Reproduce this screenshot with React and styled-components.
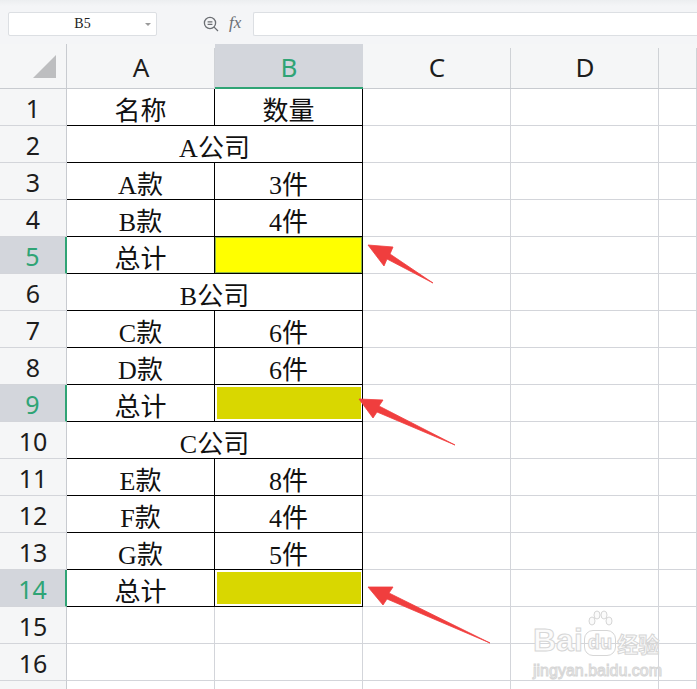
import styled, { createGlobalStyle } from "styled-components";

const GlobalStyle = createGlobalStyle`
  html, body {
    margin: 0;
    padding: 0;
    background: #fff;
    overflow: hidden;
  }
  * { box-sizing: border-box; }
`;

const GREEN = "#2fa475";
const GRID = "#d3d5da";
const HEAD_LINE = "#c8cbd0";
const COLS = "67px 148px 148px 148px 148px 1fr";

const rows = [
  { n: 1, a: "名称", b: "数量" },
  { n: 2, merged: "A公司" },
  { n: 3, a: "A款", b: "3件" },
  { n: 4, a: "B款", b: "4件" },
  { n: 5, a: "总计", fill: "bright", active: true },
  { n: 6, merged: "B公司" },
  { n: 7, a: "C款", b: "6件" },
  { n: 8, a: "D款", b: "6件" },
  { n: 9, a: "总计", fill: "olive", active: true },
  { n: 10, merged: "C公司" },
  { n: 11, a: "E款", b: "8件" },
  { n: 12, a: "F款", b: "4件" },
  { n: 13, a: "G款", b: "5件" },
  { n: 14, a: "总计", fill: "olive", active: true },
  { n: 15, empty: true },
  { n: 16, empty: true },
  // row 17 only peeks in at the bottom edge, its number is below the fold
  { n: "", empty: true },
];

// red callout arrows, tip -> head -> tail
const arrows = [
  "368,245 393,247 390,254 433,283 387,259 384,266",
  "359,399 383,400 379,406 455,445 377,412 373,418",
  "368,587 393,587 389,593 490,643 387,599 383,605",
];

const App = () => {
  return (
    <Page>
      <GlobalStyle />
      <Toolbar>
        <NameBox>
          <NameText>B5</NameText>
          <Caret />
        </NameBox>
        <ZoomIcon width="16" height="16" viewBox="0 0 16 16">
          <circle cx="7" cy="7" r="5.6" fill="none" stroke="#6b6e73" strokeWidth="1.3" />
          <path d="M4.6 5.9h4.8M4.6 8.3h4.8M11.1 11.1l3.9 3.9" stroke="#6b6e73" strokeWidth="1.3" fill="none" />
        </ZoomIcon>
        <Fx>fx</Fx>
        <Formula />
      </Toolbar>

      <Sheet>
        <HeaderRow>
          <Corner>
            <Triangle />
          </Corner>
          <ColHead>A</ColHead>
          <ColHead $active>B</ColHead>
          <ColHead>C</ColHead>
          <ColHead>D</ColHead>
          <ColHead />
        </HeaderRow>

        {rows.map((r, i) => (
          <Row key={i}>
            <RowHead $active={r.active}>{r.n}</RowHead>
            {r.merged && (
              <Cell $framed $span={2}>
                {r.merged}
              </Cell>
            )}
            {!r.merged && !r.empty && (
              <>
                <Cell $framed>{r.a}</Cell>
                <Cell $framed>
                  {r.fill ? <Fill $variant={r.fill} /> : r.b}
                </Cell>
              </>
            )}
            {r.empty && (
              <>
                <Cell />
                <Cell />
              </>
            )}
            <Cell />
            <Cell />
            <Cell />
          </Row>
        ))}
      </Sheet>

      <Arrows width="697" height="689" viewBox="0 0 697 689">
        {arrows.map((p, i) => (
          <polygon key={i} points={p} fill="#f03e3e" stroke="#f03e3e" strokeWidth="0.8" strokeLinejoin="round" />
        ))}
      </Arrows>

      <Watermark>
        <LogoLine>
          <Brand>Bai</Brand>
          <PawBox>
            <Paw width="32" height="20" viewBox="0 0 32 20">
              <ellipse cx="8" cy="11" rx="3" ry="4" fill="#fbfbfb" stroke="#d6d6d6" />
              <ellipse cx="13" cy="5" rx="3" ry="4" fill="#fbfbfb" stroke="#d6d6d6" />
              <ellipse cx="20" cy="5" rx="3" ry="4" fill="#fbfbfb" stroke="#d6d6d6" />
              <ellipse cx="25" cy="11" rx="3" ry="4" fill="#fbfbfb" stroke="#d6d6d6" />
            </Paw>
            <Du>du</Du>
          </PawBox>
          <Jing>经验</Jing>
        </LogoLine>
        <Site>jingyan.baidu.com</Site>
      </Watermark>
    </Page>
  );
};

const Page = styled.div`
  position: relative;
  width: 697px;
  height: 689px;
  overflow: hidden;
  background: #fff;
`;

//

const Toolbar = styled.div`
  height: 44px;
  display: flex;
  align-items: flex-start;
  padding: 12px 0 0 8px;
  background: linear-gradient(#eceef0 0px, #f4f5f7 6px, #f4f5f7 100%);
`;

const NameBox = styled.div`
  width: 149px;
  height: 24px;
  display: flex;
  align-items: center;
  background: #fff;
  border: 1px solid #dcdfe3;
  border-radius: 2px;
`;

const NameText = styled.div`
  flex: 1;
  text-align: center;
  padding-left: 16px;
  font-family: "Liberation Serif", serif;
  font-size: 14px;
  color: #222;
`;

const Caret = styled.div`
  width: 16px;
  display: flex;
  justify-content: center;
  &::before {
    content: "";
    border-left: 3px solid transparent;
    border-right: 3px solid transparent;
    border-top: 3px solid #9a9a9a;
  }
`;

const ZoomIcon = styled.svg`
  margin: 4px 0 0 46px;
  flex: none;
`;

const Fx = styled.div`
  margin-left: 10px;
  width: 15px;
  height: 24px;
  line-height: 22px;
  font-family: "Liberation Serif", serif;
  font-style: italic;
  font-size: 17px;
  color: #6b6e73;
`;

const Formula = styled.div`
  flex: 1;
  margin-left: 9px;
  height: 24px;
  background: #fff;
  border: 1px solid #dcdfe3;
  border-right: none;
  border-radius: 2px 0 0 2px;
`;

//

const Sheet = styled.div`
  display: flex;
  flex-direction: column;
`;

const HeaderRow = styled.div`
  display: grid;
  grid-template-columns: ${COLS};
  height: 45px;
`;

const Corner = styled.div`
  display: flex;
  justify-content: flex-end;
  align-items: flex-end;
  padding: 0 10px 10px 0;
  background: #f5f6f7;
  border-right: 1px solid ${HEAD_LINE};
  border-bottom: 1px solid ${HEAD_LINE};
`;

const Triangle = styled.div`
  width: 23px;
  height: 23px;
  background: #bdbec0;
  clip-path: polygon(100% 0, 100% 100%, 0 100%);
`;

const ColHead = styled.div`
  position: relative;
  display: flex;
  align-items: center;
  justify-content: center;
  padding-top: 2px;
  background: ${(p) => (p.$active ? "#d3d6dc" : "#f5f6f7")};
  border-bottom: ${(p) => (p.$active ? `2px solid ${GREEN}` : `1px solid ${HEAD_LINE}`)};
  font-family: "Noto Sans", sans-serif;
  font-size: 26px;
  color: ${(p) => (p.$active ? GREEN : "#1d1d1d")};

  &::after {
    content: "";
    position: absolute;
    right: 0;
    top: 4px;
    bottom: 0;
    width: 1px;
    background: ${(p) => (p.$active ? "transparent" : "#cfd2d6")};
  }
`;

const Row = styled.div`
  display: grid;
  grid-template-columns: ${COLS};
  height: 37px;
`;

const RowHead = styled.div`
  display: flex;
  align-items: center;
  justify-content: center;
  padding-top: 1px;
  background: ${(p) => (p.$active ? "#d3d6dc" : "#f5f6f7")};
  border-right: ${(p) => (p.$active ? `2px solid ${GREEN}` : `1px solid ${HEAD_LINE}`)};
  border-bottom: 1px solid ${GRID};
  font-family: "Noto Sans", sans-serif;
  font-size: 25px;
  color: ${(p) => (p.$active ? GREEN : "#1d1d1d")};
`;

const Cell = styled.div`
  grid-column: span ${(p) => p.$span || 1};
  display: flex;
  align-items: center;
  justify-content: center;
  padding-top: 3px;
  border-right: 1px solid ${(p) => (p.$framed ? "#000" : GRID)};
  border-bottom: 1px solid ${(p) => (p.$framed ? "#000" : GRID)};
  font-family: "Liberation Serif", "Noto Sans CJK SC", serif;
  font-size: 26px;
  color: #111;
  overflow: hidden;
`;

const Fill = styled.div`
  align-self: stretch;
  flex: 1;
  margin: ${(p) => (p.$variant === "bright" ? "-3px 0 0 0" : "-1px 1px 2px 2px")};
  background: ${(p) => (p.$variant === "bright" ? "#ffff00" : "#d9d700")};
  border: ${(p) => (p.$variant === "bright" ? "1px solid #8cb43e" : "none")};
`;

//

const Arrows = styled.svg`
  position: absolute;
  left: 0;
  top: 0;
  pointer-events: none;
`;

const Watermark = styled.div`
  position: absolute;
  left: 533px;
  top: 608px;
  display: flex;
  flex-direction: column;
  align-items: flex-start;
  pointer-events: none;
`;

const LogoLine = styled.div`
  display: flex;
  align-items: flex-end;
  height: 48px;
`;

const Brand = styled.span`
  font-family: "Liberation Sans", sans-serif;
  font-weight: bold;
  font-size: 32px;
  line-height: 32px;
  color: #fbfbfb;
  -webkit-text-stroke: 1px #d6d6d6;
`;

const PawBox = styled.div`
  display: flex;
  flex-direction: column;
  align-items: center;
  margin: 0 1px;
`;

const Paw = styled.svg`
  display: block;
`;

const Du = styled.span`
  font-family: "Liberation Sans", sans-serif;
  font-weight: bold;
  font-size: 20px;
  line-height: 22px;
  padding: 0 3px 2px;
  border: 1px solid #d6d6d6;
  border-radius: 9px;
  color: #fbfbfb;
  -webkit-text-stroke: 1px #d6d6d6;
`;

const Jing = styled.span`
  font-family: "Noto Sans CJK SC", sans-serif;
  font-weight: bold;
  font-size: 21px;
  line-height: 26px;
  color: #fbfbfb;
  -webkit-text-stroke: 1px #d6d6d6;
`;

const Site = styled.span`
  margin-top: 6px;
  font-family: "Liberation Sans", sans-serif;
  font-size: 16px;
  line-height: 18px;
  color: #fbfbfb;
  -webkit-text-stroke: 1px #d6d6d6;
`;

export default App;
